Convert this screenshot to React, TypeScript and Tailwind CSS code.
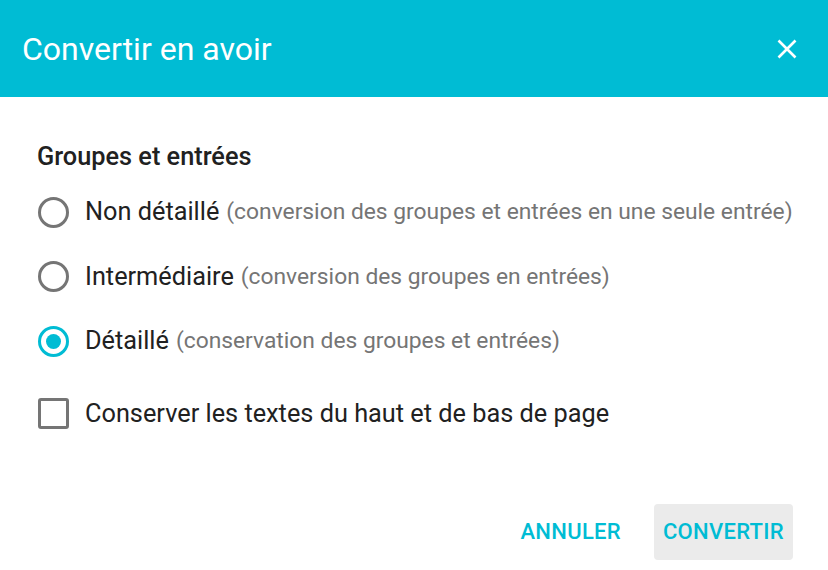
import React from "react";

function Radio({ checked }: { checked?: boolean }) {
  return (
    <span
      className={
        "flex h-[31px] w-[31px] shrink-0 items-center justify-center rounded-full border-[3px] " +
        (checked ? "border-[#00bcd4]" : "border-[#757575]")
      }
    >
      {checked && <span className="h-[15px] w-[15px] rounded-full bg-[#00bcd4]" />}
    </span>
  );
}

function Row({ label, hint, checked }: { label: string; hint: string; checked?: boolean }) {
  return (
    <div className="flex h-[64.5px] items-center">
      <div className="flex w-[48px] justify-start pl-[1px]">
        <Radio checked={checked} />
      </div>
      <span className="text-[25.3px] text-[#212121]">{label}</span>
      <span className="ml-[7px] text-[22.8px] text-[#757575]">{hint}</span>
    </div>
  );
}

export default function App() {
  return (
    <div
      className="h-[570px] w-[828px] bg-white"
      style={{ fontFamily: "Roboto, 'Noto Sans', sans-serif" }}
    >
      <div className="flex h-[97px] items-center justify-between bg-[#00bcd4] pl-[22px] pr-[31px]">
        <span className="text-[32px] leading-none text-white">Convertir en avoir</span>
        <svg width="20" height="20" viewBox="0 0 20 20" fill="none" stroke="white" strokeWidth="2.6">
          <path d="M1.5 1.5 L18.5 18.5 M18.5 1.5 L1.5 18.5" />
        </svg>
      </div>
      <div className="pl-[37px] pt-[44px]">
        <div className="text-[25.3px] font-medium leading-[32px] text-[#212121]">Groupes et entrées</div>
        <div className="mt-[7px]">
          <Row label="Non détaillé" hint="(conversion des groupes et entrées en une seule entrée)" />
          <Row label="Intermédiaire" hint="(conversion des groupes en entrées)" />
          <Row label="Détaillé" hint="(conservation des groupes et entrées)" checked />
        </div>
        <div className="mt-[8px] flex h-[64px] items-center">
          <div className="flex w-[48px] pl-[1px]">
            <span className="h-[31px] w-[31px] rounded-[3px] border-[3px] border-[#757575]" />
          </div>
          <span className="text-[25.3px] text-[#212121]">Conserver les textes du haut et de bas de page</span>
        </div>
      </div>
      <div className="mt-[58px] flex justify-end gap-[17px] pr-[35px]">
        <button className="flex h-[56px] items-center rounded-[4px] px-[16px] text-[22px] font-medium tracking-[0.3px] text-[#00bcd4]">
          ANNULER
        </button>
        <button className="flex h-[56px] items-center rounded-[4px] bg-[#ebebeb] px-[9px] text-[22px] font-medium tracking-[0.3px] text-[#00bcd4]">
          CONVERTIR
        </button>
      </div>
    </div>
  );
}
